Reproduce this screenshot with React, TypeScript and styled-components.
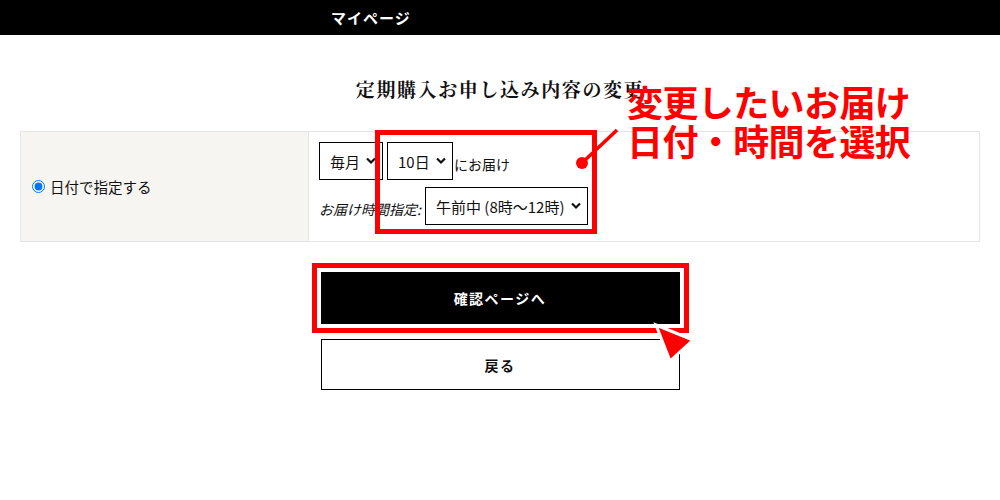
import * as React from 'react';
import styled, { createGlobalStyle } from 'styled-components';

const GlobalStyle = createGlobalStyle`
  body {
    margin: 0;
    background: #ffffff;
    font-family: "Noto Sans CJK JP", "Noto Sans", sans-serif;
    color: #111111;
  }
`;

const Header = styled.header`
  height: 35px;
  background: #000000;
  display: flex;
  align-items: center;
  padding-left: 331px;
  box-sizing: border-box;
`;

const HeaderTitle = styled.span`
  color: #ffffff;
  font-weight: 700;
  font-size: 15px;
  letter-spacing: 1px;
`;

const Main = styled.main`
  position: relative;
  padding: 0 20px;
`;

const PageTitle = styled.h1`
  margin: 0;
  padding-top: 40px;
  height: 96px;
  box-sizing: border-box;
  text-align: center;
  font-family: "Noto Serif CJK JP", "Noto Sans CJK JP", serif;
  font-weight: 700;
  font-size: 19px;
  letter-spacing: 1.6px;
  line-height: 28px;
  color: #111111;
`;

const Table = styled.div`
  display: grid;
  grid-template-columns: 288px 1fr;
  border: 1px solid #e5e5e5;
  width: 960px;
  box-sizing: border-box;
`;

const LabelCell = styled.div`
  background: #f7f5f1;
  border-right: 1px solid #e5e5e5;
  display: flex;
  align-items: center;
  gap: 5px;
  padding-left: 11px;
  font-size: 14.5px;
`;

const Radio = styled.input`
  margin: 0;
  width: 13px;
  height: 13px;
`;

const ValueCell = styled.div`
  display: flex;
  flex-direction: column;
  gap: 7px;
  padding: 10px 10px 16px 10px;
`;

const Row = styled.div`
  display: flex;
  align-items: flex-end;
  gap: 4px;
`;

const SelectBox = styled.div<{ $width: number }>`
  position: relative;
  width: ${(p) => p.$width}px;
  height: 38px;
  box-sizing: border-box;
  border: 1px solid #000000;
  background: #ffffff;
  display: flex;
  align-items: center;
  padding-left: 10px;
  font-size: 15px;
  color: #111111;
`;

const Chevron = styled.svg`
  position: absolute;
  right: 5px;
  top: 13px;
`;

const Inline = styled.span`
  font-size: 14px;
  line-height: 20px;
  margin-bottom: 6px;
  margin-left: -3px;
`;

const TimeLabel = styled.span`
  font-size: 14px;
  font-style: italic;
  line-height: 20px;
  margin-bottom: 6px;
  width: 102px;
`;

const Buttons = styled.div`
  display: flex;
  flex-direction: column;
  align-items: center;
  gap: 15px;
  margin-top: 30px;
`;

const ButtonWrap = styled.div`
  position: relative;
`;

const Button = styled.button<{ $primary?: boolean }>`
  width: 359px;
  height: ${(p) => (p.$primary ? 52 : 51)}px;
  display: flex;
  align-items: center;
  justify-content: center;
  border: 1px solid #000000;
  background: ${(p) => (p.$primary ? '#000000' : '#ffffff')};
  color: ${(p) => (p.$primary ? '#ffffff' : '#111111')};
  font-family: "Noto Sans CJK JP", sans-serif;
  font-weight: 700;
  font-size: 14px;
  letter-spacing: 1.5px;
  padding: 0;
`;

const RedFrame = styled.div<{ $inset: number }>`
  position: absolute;
  inset: -${(p) => p.$inset}px;
  border: 5px solid #ff0000;
  pointer-events: none;
`;

const SelectFrame = styled.div`
  position: absolute;
  left: 375px;
  top: 95px;
  width: 222px;
  height: 104px;
  box-sizing: border-box;
  border: 5px solid #ff0000;
  pointer-events: none;
`;

const Callout = styled.div`
  position: absolute;
  left: 627px;
  top: 47px;
  color: #ff0000;
  font-weight: 700;
  font-size: 36px;
  line-height: 39px;
  letter-spacing: -0.6px;
  white-space: nowrap;
`;

const Overlay = styled.svg`
  position: absolute;
  left: 0;
  top: 0;
  pointer-events: none;
`;

const Select = ({ width, label }: { width: number; label: string }) => (
  <SelectBox $width={width}>
    {label}
    <Chevron width="12" height="10" viewBox="0 0 12 10">
      <path d="M2 2.5 L6 6.5 L10 2.5" fill="none" stroke="#111" strokeWidth="2.2" />
    </Chevron>
  </SelectBox>
);

export default function App() {
  return (
    <>
      <GlobalStyle />
      <Header>
        <HeaderTitle>マイページ</HeaderTitle>
      </Header>
      <Main>
        <PageTitle>定期購入お申し込み内容の変更</PageTitle>
        <Table>
          <LabelCell>
            <Radio type="radio" defaultChecked name="delivery" />
            日付で指定する
          </LabelCell>
          <ValueCell>
            <Row>
              <Select width={64} label="毎月" />
              <Select width={66} label="10日" />
              <Inline>にお届け</Inline>
            </Row>
            <Row>
              <TimeLabel>お届け時間指定:</TimeLabel>
              <Select width={163} label="午前中 (8時〜12時)" />
            </Row>
          </ValueCell>
        </Table>
        <Buttons>
          <ButtonWrap>
            <Button $primary>確認ページへ</Button>
            <RedFrame $inset={9} />
          </ButtonWrap>
          <Button>戻る</Button>
        </Buttons>

        <SelectFrame />
        <Callout>
          変更したいお届け
          <br />
          日付・時間を選択
        </Callout>
        <Overlay width="1000" height="465" viewBox="0 0 1000 465">
          <line x1="582" y1="128" x2="617" y2="95" stroke="#ff0000" strokeWidth="3.5" />
          <circle cx="582" cy="128" r="6" fill="#ff0000" />
          <polygon
            points="656,290 693,305 670,326"
            fill="#ff0000"
            stroke="#ffffff"
            strokeWidth="3"
            strokeLinejoin="miter"
          />
        </Overlay>
      </Main>
    </>
  );
}
